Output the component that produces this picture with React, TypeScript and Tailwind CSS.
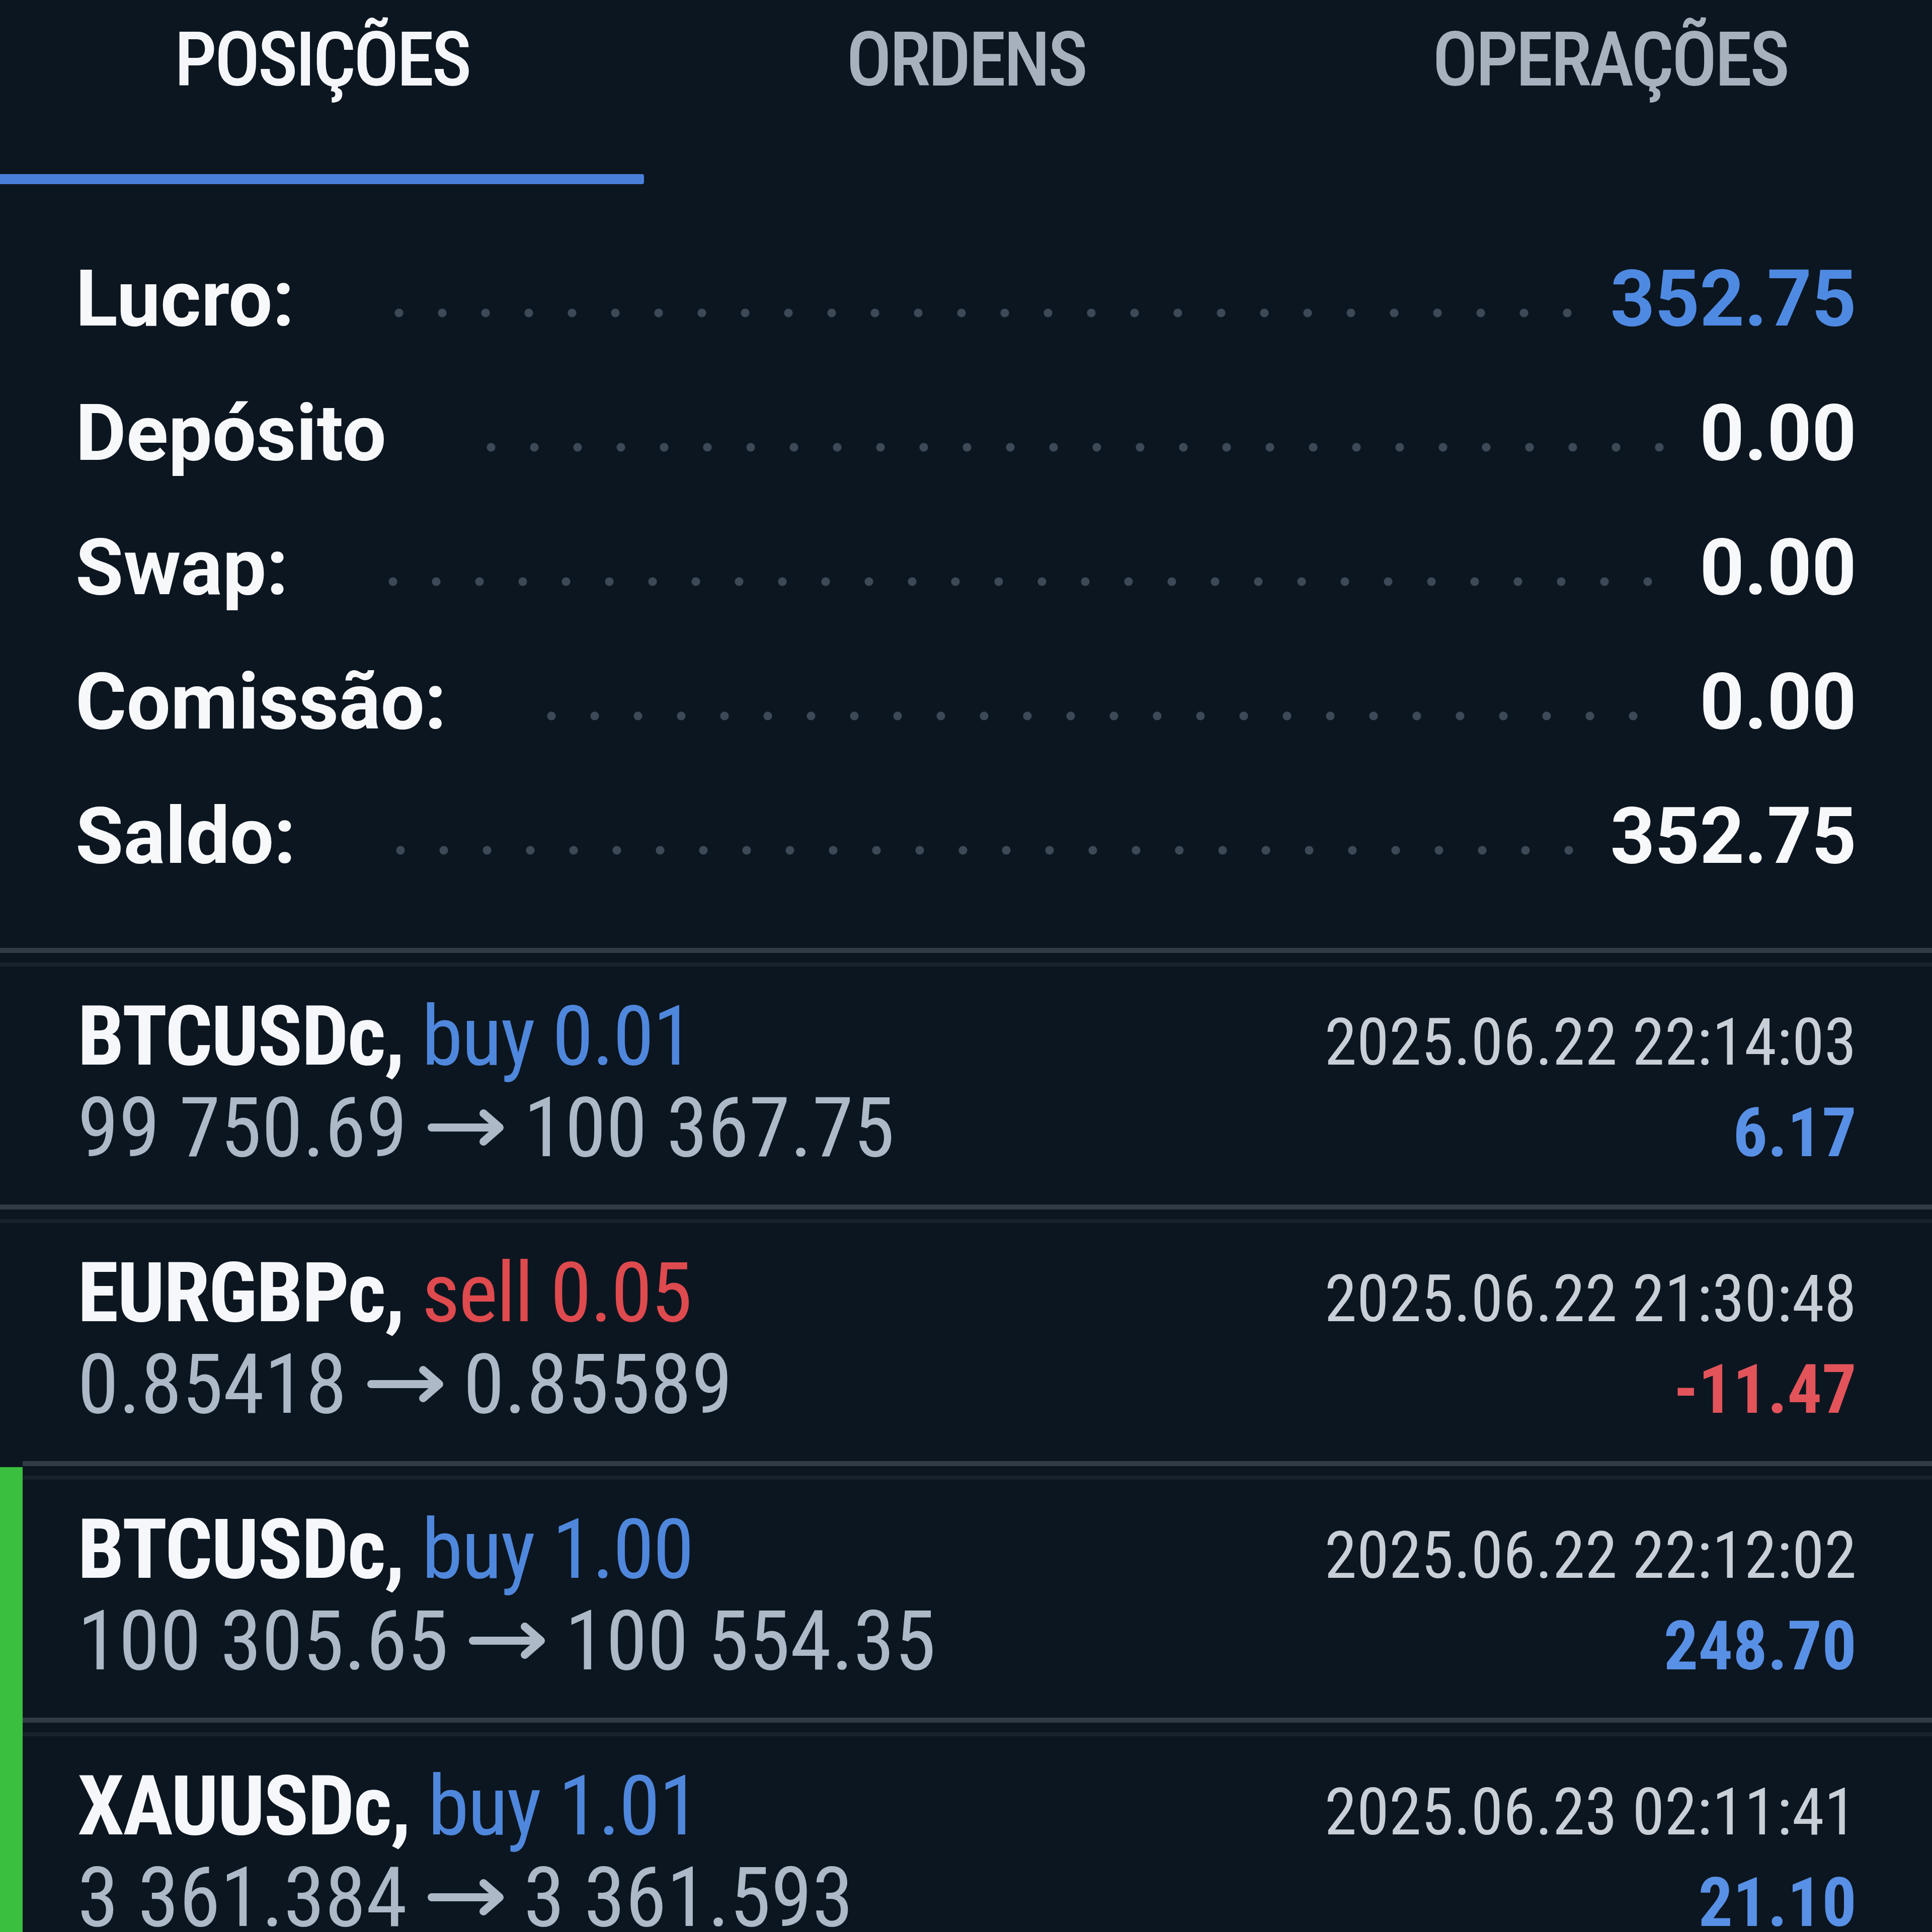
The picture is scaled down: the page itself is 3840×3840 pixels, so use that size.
import React from 'react'

type Position = {
  symbol: string,
  side: 'buy' | 'sell',
  volume: string,
  open: string,
  current: string,
  time: string,
  profit: string,
}

const positions: Position[] = [
  { symbol: 'BTCUSDc', side: 'buy', volume: '0.01', open: '99 750.69', current: '100 367.75', time: '2025.06.22 22:14:03', profit: '6.17' },
  { symbol: 'EURGBPc', side: 'sell', volume: '0.05', open: '0.85418', current: '0.85589', time: '2025.06.22 21:30:48', profit: '-11.47' },
  { symbol: 'BTCUSDc', side: 'buy', volume: '1.00', open: '100 305.65', current: '100 554.35', time: '2025.06.22 22:12:02', profit: '248.70' },
  { symbol: 'XAUUSDc', side: 'buy', volume: '1.01', open: '3 361.384', current: '3 361.593', time: '2025.06.23 02:11:41', profit: '21.10' },
]

const summary = [
  { label: 'Lucro:', value: '352.75', blue: true, dots: 'ml-[165px] mr-[70px]' },
  { label: 'Depósito', value: '0.00', blue: false, dots: 'ml-[165px] mr-[70px]' },
  { label: 'Swap:', value: '0.00', blue: false, dots: 'ml-[165px] mr-[70px]' },
  { label: 'Comissão:', value: '0.00', blue: false, dots: 'ml-[165px] mr-[110px]' },
  { label: 'Saldo:', value: '352.75', blue: false, dots: 'ml-[165px] mr-[70px]' },
]

function Tab({ text, active }: { text: string, active?: boolean }) {
  return (
    <div className="flex flex-col items-center justify-between">
      <span className={`pt-[44px] text-[150px] leading-none tracking-[-0.03em] font-medium font-['Roboto_Condensed','Liberation_Sans_Narrow',Roboto,sans-serif] font-stretch-condensed ${active ? 'text-[#f4f6f9]' : 'text-[#a7b1be]'}`}>
        {text}
      </span>
      <div className={`h-[20px] w-full rounded-r-[4px] ${active ? 'bg-[#4a7fd9]' : 'bg-transparent'}`} />
    </div>
  )
}

function Arrow() {
  return (
    <svg viewBox="0 0 155 72" className="inline-block w-[155px] h-[72px] mb-[26px]" fill="none" stroke="#adb9c7" strokeWidth="16" strokeLinecap="round" strokeLinejoin="round">
      <path d="M10 36 H143" />
      <path d="M113 8 L145 36 L113 64" />
    </svg>
  )
}

function PositionRow({ p, inset }: { p: Position, inset?: boolean }) {
  const sideColor = p.side === 'buy' ? 'text-[#4f87dc]' : 'text-[#de4a4e]'
  const profitColor = p.profit.startsWith('-') ? 'text-[#e2545a]' : 'text-[#5890e6]'
  return (
    <div className={`border-t-[10px] border-[#313b46] bg-[linear-gradient(to_bottom,transparent_19px,#18222c_19px,#18222c_27px,transparent_27px)] pt-[75px] pb-[61px] pr-[150px] font-['Roboto_Condensed','Liberation_Sans_Narrow',Roboto,sans-serif] font-stretch-condensed ${inset ? 'pl-[109px]' : 'pl-[154px]'}`}>
      <div className="flex h-[182px] items-baseline justify-between leading-[182px]">
        <div className="text-[166px] tracking-[-0.015em] whitespace-nowrap">
          <span className="font-bold text-[#f5f7fa]">{p.symbol},</span>{' '}
          <span className={sideColor}>{p.side} {p.volume}</span>
        </div>
        <span className="text-[130px] leading-none text-[#c9cfd7] whitespace-nowrap">{p.time}</span>
      </div>
      <div className="flex h-[182px] items-baseline justify-between leading-[182px]">
        <div className="text-[166px] text-[#adb9c7] whitespace-nowrap">
          {p.open} <Arrow /> {p.current}
        </div>
        <span className={`text-[136px] leading-none font-bold whitespace-nowrap ${profitColor}`}>{p.profit}</span>
      </div>
    </div>
  )
}

export default function App() {
  return (
    <div className="w-[3840px] h-[3840px] overflow-hidden bg-[#0c1620]">
      <div className="grid grid-cols-3 h-[366px]">
        <Tab text="POSIÇÕES" active />
        <Tab text="ORDENS" />
        <Tab text="OPERAÇÕES" />
      </div>

      <div className="px-[150px] pt-[95px] pb-[88px] font-['Roboto','Liberation_Sans',sans-serif]">
        {summary.map((s) => (
          <div key={s.label} className="flex h-[267px] items-center">
            <span className="text-[155px] font-bold leading-none text-[#f7f8fa] whitespace-nowrap">{s.label}</span>
            <div className={`flex-1 h-[24px] mt-[54px] bg-[radial-gradient(circle_at_center,#3d4957_8px,transparent_9px)] bg-[length:86px_24px] bg-repeat-x ${s.dots}`} />
            <span className={`text-[155px] font-bold leading-none whitespace-nowrap ${s.blue ? 'text-[#4f8ae2]' : 'text-[#f7f8fa]'}`}>{s.value}</span>
          </div>
        ))}
      </div>

      <PositionRow p={positions[0]} />
      <PositionRow p={positions[1]} />
      <div className="flex">
        <div className="w-[45px] shrink-0 mt-[12px] bg-[#3bbf3e]" />
        <div className="flex-1">
          <PositionRow p={positions[2]} inset />
          <PositionRow p={positions[3]} inset />
        </div>
      </div>
    </div>
  )
}
